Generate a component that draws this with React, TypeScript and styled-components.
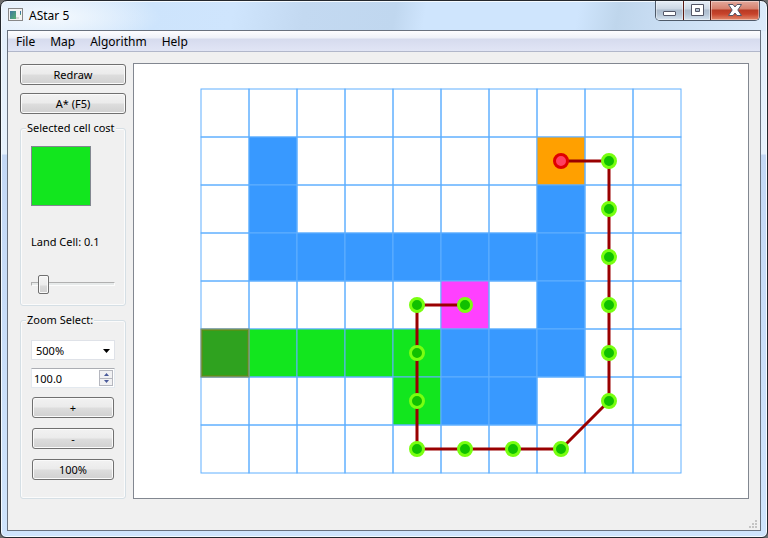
import React, { useState } from "react";
import styled, { createGlobalStyle } from "styled-components";

const GlobalStyle = createGlobalStyle`
  * { box-sizing: border-box; }
  html, body { margin: 0; background: #6d6d6d; }
  body, button, input, select {
    font-family: "Noto Sans", "Liberation Sans", sans-serif;
    font-size: 11px;
    color: #000;
  }
`;

const Window = styled.div`
  min-height: 100vh;
  display: flex;
  flex-direction: column;
  padding: 0 6px 6px;
  border: 1px solid #24282e;
  border-radius: 7px 7px 6px 6px;
  background:
    radial-gradient(ellipse 110px 30px at 50px 16px, #f4f9fe, rgba(244, 249, 254, 0)) top / 100% 30px no-repeat,
    linear-gradient(100deg, #dcebfa 0, #cde4fc 150px, #cfe5fd 230px, #c3d9f1 300px, #c0d7ef 390px, #cfe5fd 420px, #cfe5fd 570px, #bfd6ec 610px, #c6dbf1 640px, #dcebfa 100%) top / 100% 30px no-repeat,
    linear-gradient(#e3effb 0, #e6f1fc 153px, #c3d8f5 154px, #cfe4fc 100%);
  box-shadow: inset 0 0 0 1px #f4faff;
`;

const TitleBar = styled.header`
  height: 29px;
  flex: none;
  display: flex;
  align-items: flex-start;
  padding: 0 1px;
`;

const TitleIcon = styled.svg`
  margin-top: 6px;
  flex: none;
`;

const Title = styled.h1`
  flex: 1;
  margin: 0 0 0 5px;
  font-size: 12px;
  font-weight: 400;
  line-height: 29px;
`;

const Captions = styled.div`
  display: flex;
  height: 20px;
  border: 1px solid #4e5a69;
  border-top: 0;
  border-radius: 0 0 5px 5px;
  overflow: hidden;
`;

const CaptionButton = styled.button<{ $wide?: boolean }>`
  width: ${(p) => (p.$wide ? 49 : 27)}px;
  padding: 0;
  border: 0;
  display: grid;
  place-items: center;
  background: ${(p) =>
    p.$wide
      ? "linear-gradient(#e3a99c 0, #d6806d 8px, #b83a24 9px, #c7432b 13px, #e2896c 19px)"
      : "linear-gradient(#e6eef7 0, #ccd7e4 8px, #adbccd 9px, #b4c4d5 13px, #d5e2ef 19px)"};
  box-shadow: inset 0 0 0 1px rgba(255, 255, 255, 0.4);
  & + & {
    box-sizing: ${(p) => (p.$wide ? "border-box" : "content-box")};
    border-left: 1px solid ${(p) => (p.$wide ? "#5c1a12" : "#6d7b8b")};
  }
`;

const Client = styled.div`
  flex: 1;
  display: flex;
  flex-direction: column;
  border: 1px solid #68717e;
  background: #f0f0f0;
`;

const MenuBar = styled.nav`
  height: 21px;
  flex: none;
  display: flex;
  border-bottom: 1px solid #b1b7ca;
  background: linear-gradient(#fdfdff 0, #eef1f8 7px, #d6dbee 8px, #e1e5f5 20px);
`;

const MenuItem = styled.button`
  padding: 1px 7px 0 8px;
  border: 0;
  background: none;
  font-size: 12px;
  line-height: 20px;
`;

const Workspace = styled.main`
  flex: 1;
  display: flex;
  gap: 7px;
  padding: 11px 11px 9px 12px;
`;

const Sidebar = styled.aside`
  width: 106px;
  flex: none;
  display: flex;
  flex-direction: column;
  padding-top: 1px;
`;

const PushButton = styled.button`
  height: 21px;
  flex: none;
  padding: 0;
  border: 1px solid #707070;
  border-radius: 3px;
  background: linear-gradient(#f2f2f2 0, #ebebeb 9px, #dddddd 10px, #cfcfcf 20px);
  box-shadow: inset 0 0 0 1px #fafafa;
  line-height: 18px;
`;

const Commands = styled.div`
  display: flex;
  flex-direction: column;
  gap: 8px;
  margin-bottom: 7px;
`;

const Group = styled.fieldset<{ $grow?: boolean }>`
  margin: 0;
  min-width: 0;
  padding: 0 10px;
  flex: ${(p) => (p.$grow ? "1" : "none")};
  border: 1px solid #d5dfe5;
  border-radius: 3px;
  box-shadow: inset 0 0 0 1px #fbfbfb;
  & + & { margin-top: 7px; }
`;

const Legend = styled.legend`
  margin-left: -5px;
  padding: 0 1px;
  line-height: 14px;
  white-space: nowrap;
  background: #f0f0f0;
`;

const CostPanel = styled.div`
  display: flex;
  flex-direction: column;
  padding: 11px 0;
`;

const Swatch = styled.div`
  width: 60px;
  height: 60px;
  border: 1px solid #828790;
  background: #12e61e;
`;

const CostLabel = styled.label`
  margin: 27px 0 23px;
  line-height: 18px;
`;

const Slider = styled.input`
  appearance: none;
  width: 100%;
  height: 20px;
  margin: 0;
  background: transparent;
  &::-webkit-slider-runnable-track {
    height: 4px;
    border: 1px solid;
    border-color: #b0b0b0 #fcfcfc #fcfcfc #b0b0b0;
    background: #e7eaea;
  }
  &::-webkit-slider-thumb {
    appearance: none;
    width: 11px;
    height: 19px;
    margin-top: -8px;
    border: 1px solid #707070;
    border-radius: 2px;
    background: linear-gradient(#f4f4f4 0, #ececec 9px, #dadada 10px, #d0d0d0 18px);
    box-shadow: inset 0 0 0 1px #fafafa;
  }
`;

const ZoomPanel = styled.div`
  display: flex;
  flex-direction: column;
  gap: 8px;
  padding-top: 13px;
`;

const Field = styled.div`
  display: flex;
  height: 20px;
  border: 1px solid #e3e9ef;
  border-top-color: #abadb3;
  background: #fff;
`;

const ComboField = styled(Field)`
  position: relative;
  border-color: #dfe2e8;
`;

const Combo = styled.select`
  appearance: none;
  width: 100%;
  padding: 0 4px;
  border: 0;
  background: transparent;
`;

const ComboArrow = styled.svg`
  position: absolute;
  right: 4px;
  top: 8px;
  pointer-events: none;
`;

const SpinInput = styled.input`
  flex: 1;
  min-width: 0;
  padding: 0 2px;
  border: 0;
  background: transparent;
`;

const Steps = styled.div`
  width: 14px;
  margin: 1px;
  display: flex;
  flex-direction: column;
`;

const Step = styled.button`
  flex: 1;
  padding: 0;
  display: grid;
  place-items: center;
  border: 1px solid #b5b7bf;
  background: #f1f1f3;
  & + & { border-top: 0; }
`;

const ZoomButtons = styled.div`
  display: flex;
  flex-direction: column;
  gap: 10px;
  padding: 1px 1px 0;
`;

const View = styled.section`
  flex: 1;
  min-width: 0;
  display: flex;
  align-items: center;
  justify-content: center;
  border: 1px solid #828790;
  background: #fff;
`;

const StatusBar = styled.footer`
  height: 22px;
  flex: none;
  display: flex;
  justify-content: flex-end;
  align-items: flex-end;
  padding: 0 3px 2px 0;
`;

const CELL = 48;
const COLORS: Record<string, string> = {
  ".": "none",
  w: "#3899ff",
  g: "#12e61e",
  d: "#2fa21f",
  s: "#ff40ff",
  e: "#ffa000",
};
const ROWS = [
  "..........",
  ".w.....e..",
  ".w.....w..",
  ".wwwwwww..",
  ".....s.w..",
  "dggggwww..",
  "....gww...",
  "..........",
];
const PATH: [number, number][] = [
  [5, 4], [4, 4], [4, 5], [4, 6], [4, 7], [5, 7], [6, 7], [7, 7],
  [8, 6], [8, 5], [8, 4], [8, 3], [8, 2], [8, 1], [7, 1],
];
const center = (n: number) => n * CELL + CELL / 2;

function MapView() {
  const cells = ROWS.flatMap((row, y) =>
    row.split("").map((kind, x) => ({ kind, x, y }))
  );
  return (
    <svg width="482" height="386" viewBox="-1 -1 482 386" role="img" aria-label="Map">
      {cells.map(({ kind, x, y }) => (
        <rect
          key={`${x}-${y}`}
          x={x * CELL}
          y={y * CELL}
          width={CELL}
          height={CELL}
          fill={COLORS[kind]}
          stroke="#60b0ff"
        />
      ))}
      <rect x="1" y={5 * CELL + 1} width="46" height="46" fill="none" stroke="#6a8a10" strokeWidth="2" opacity="0.6" />
      <rect x="0" y={5 * CELL} width="48" height="48" fill="none" stroke="#909060" />
      <polyline
        points={PATH.map(([x, y]) => `${center(x)},${center(y)}`).join(" ")}
        fill="none"
        stroke="#990000"
        strokeWidth="3"
      />
      {PATH.map(([x, y], i) => {
        const goal = i === PATH.length - 1;
        return (
          <circle
            key={i}
            cx={center(x)}
            cy={center(y)}
            r="6.5"
            fill={goal ? "#ff4060" : "#10c000"}
            stroke={goal ? "#e00000" : "#78ff10"}
            strokeWidth="3"
          />
        );
      })}
    </svg>
  );
}

export default function App() {
  const [zoom, setZoom] = useState("100.0");
  const [cost, setCost] = useState(9);
  const step = (d: number) => setZoom((z) => (Number(z) + d).toFixed(1));
  return (
    <>
      <GlobalStyle />
      <Window>
        <TitleBar>
          <TitleIcon width="16" height="16" viewBox="0 0 16 16" aria-hidden="true">
            <defs>
              <linearGradient id="pane" x1="0" y1="0" x2="1" y2="1">
                <stop offset="0" stopColor="#3f78a0" />
                <stop offset="1" stopColor="#58b070" />
              </linearGradient>
            </defs>
            <rect x="0.5" y="1.5" width="14" height="12" fill="#f4f4f4" stroke="#888" />
            <rect x="2" y="4" width="6" height="8" fill="url(#pane)" />
            <rect x="8" y="10" width="3" height="2" fill="#d4d4d4" />
            <rect x="12" y="4" width="1" height="3" fill="#3f78a0" />
            <rect x="12" y="7" width="1" height="1" fill="#58b070" />
          </TitleIcon>
          <Title>AStar 5</Title>
          <Captions>
            <CaptionButton aria-label="Minimize">
              <svg width="13" height="13" viewBox="0 0 13 13">
                <rect x="0.5" y="7.5" width="12" height="4" rx="0.5" fill="#fff" stroke="#535666" />
              </svg>
            </CaptionButton>
            <CaptionButton aria-label="Maximize">
              <svg width="13" height="13" viewBox="0 0 13 13">
                <path d="M.5 .5H12.500V11.500H.5ZM4.500 4.500V7.500H8.500V4.500Z" fill="#fff" fillRule="evenodd" stroke="#535666" />
              </svg>
            </CaptionButton>
            <CaptionButton $wide aria-label="Close">
              <svg width="14" height="13" viewBox="0 0 14 13">
                <path d="M.5 .5H5L7 3L9 .5H13.500L9.800 6L13.500 11.500H9L7 9L5 11.500H.5L4.200 6Z" fill="#fff" stroke="#535666" />
              </svg>
            </CaptionButton>
          </Captions>
        </TitleBar>
        <Client>
          <MenuBar>
            <MenuItem>File</MenuItem>
            <MenuItem>Map</MenuItem>
            <MenuItem>Algorithm</MenuItem>
            <MenuItem>Help</MenuItem>
          </MenuBar>
          <Workspace>
            <Sidebar>
              <Commands>
                <PushButton>Redraw</PushButton>
                <PushButton>A* (F5)</PushButton>
              </Commands>
              <Group>
                <Legend>Selected cell cost</Legend>
                <CostPanel>
                  <Swatch />
                  <CostLabel htmlFor="cost">Land Cell: 0.1</CostLabel>
                  <Slider
                    id="cost"
                    type="range"
                    min={0}
                    max={100}
                    value={cost}
                    onChange={(e) => setCost(Number(e.target.value))}
                  />
                </CostPanel>
              </Group>
              <Group $grow>
                <Legend>Zoom Select:</Legend>
                <ZoomPanel>
                  <ComboField>
                    <Combo aria-label="Zoom preset" defaultValue="500%">
                      <option>100%</option>
                      <option>500%</option>
                    </Combo>
                    <ComboArrow width="7" height="4" viewBox="0 0 7 4" aria-hidden="true">
                      <path d="M0 0H7L3.500 4Z" />
                    </ComboArrow>
                  </ComboField>
                  <Field>
                    <SpinInput aria-label="Zoom value" value={zoom} onChange={(e) => setZoom(e.target.value)} />
                    <Steps>
                      <Step aria-label="Increase" onClick={() => step(1)}>
                        <svg width="5" height="3" viewBox="0 0 5 3"><path d="M0 3H5L2.500 0Z" fill="#4a5a9a" /></svg>
                      </Step>
                      <Step aria-label="Decrease" onClick={() => step(-1)}>
                        <svg width="5" height="3" viewBox="0 0 5 3"><path d="M0 0H5L2.500 3Z" fill="#4a5a9a" /></svg>
                      </Step>
                    </Steps>
                  </Field>
                  <ZoomButtons>
                    <PushButton onClick={() => step(10)}>+</PushButton>
                    <PushButton onClick={() => step(-10)}>-</PushButton>
                    <PushButton onClick={() => setZoom("100.0")}>100%</PushButton>
                  </ZoomButtons>
                </ZoomPanel>
              </Group>
            </Sidebar>
            <View>
              <MapView />
            </View>
          </Workspace>
          <StatusBar>
            <svg width="8" height="8" viewBox="0 0 8 8" aria-hidden="true">
              <path d="M6 0h2v2h-2zM6 3h2v2h-2zM6 6h2v2h-2zM3 3h2v2h-2zM3 6h2v2h-2zM0 6h2v2h-2z" fill="#c4c4c4" />
            </svg>
          </StatusBar>
        </Client>
      </Window>
    </>
  );
}
